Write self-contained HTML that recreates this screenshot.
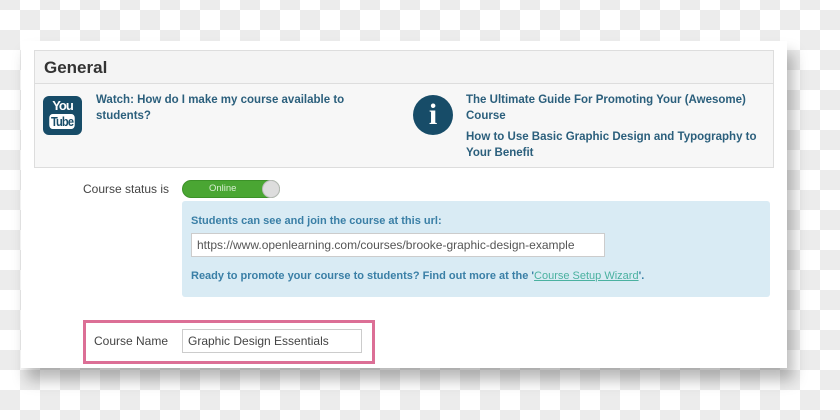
<!DOCTYPE html>
<html><head><style>
*{margin:0;padding:0;box-sizing:border-box}
body{width:840px;height:420px;overflow:hidden;position:relative;font-family:"Liberation Sans",sans-serif;
background-color:#fff;background-image:conic-gradient(#ececec 25%,#fff 0 50%,#ececec 0 75%,#fff 0);background-size:40px 40px;background-position:20px -10px}
.panel{position:absolute;left:21px;top:41px;width:766px;height:327px;background:#fff;box-shadow:6px 12px 14px rgba(0,0,0,0.28)}
.gen{position:absolute;left:13px;top:9px;width:740px;height:118px;border:1px solid #ddd;background:#f7f7f7}
.gen h1{height:33px;border-bottom:1px solid #ddd;background:#f4f4f4;font-size:17px;font-weight:bold;color:#333;padding:7px 0 0 9px}
.lnk{position:absolute;font-size:11.5px;font-weight:bold;color:#2b5f7c;line-height:16px}
.yt{position:absolute;left:8px;top:45px;width:39px;height:39px;background:#174c68;border-radius:6px;color:#fff;text-align:center;font-size:13px;font-weight:bold;line-height:15px;padding-top:2px;letter-spacing:-1px}
.yt span{display:inline-block;background:#fff;color:#174c68;border-radius:4px;padding:0 2px;margin-top:1px;transform:scaleX(.85)}
.info{position:absolute;left:378px;top:44px;width:40px;height:40px;border-radius:50%;background:#174c68;color:#fff;text-align:center;font:bold 30px "Liberation Serif",serif;line-height:40px}
.lab{position:absolute;font-size:12px;color:#444}
.tog{position:absolute;left:161px;top:139px;width:98px;height:18px;border-radius:9px;background:#4aa633;border:1px solid #3c9228;color:#d9efd3;font-size:9.5px;line-height:16px;padding-left:26px}
.tog i{position:absolute;right:-1px;top:-1px;width:18px;height:18px;border-radius:50%;background:#ddd;border:1px solid #bbb}
.blue{position:absolute;left:161px;top:160px;width:588px;height:96px;background:#d9ebf4;border-radius:3px}
.blue p{position:absolute;left:9px;font-size:11px;font-weight:bold;color:#3a7fa6}
.url{position:absolute;left:9px;top:32px;width:414px;height:24px;background:#fff;border:1px solid #ccc;font-size:12px;color:#555;padding:4px 5px}
.blue a{color:#4ab1a0;text-decoration:underline;font-weight:normal}
.pink{position:absolute;left:62px;top:279px;width:292px;height:44px;border:3px solid #dc6f96}
.inp{position:absolute;left:161px;top:288px;width:180px;height:24px;border:1px solid #ccc;font-size:12px;color:#444;padding:4px 5px}
</style></head><body>
<div class="panel">
 <div class="gen"><h1>General</h1>
  <div class="yt">You<br><span>Tube</span></div>
  <div class="lnk" style="left:61px;top:41px;width:280px">Watch: How do I make my course available to students?</div>
  <div class="info">i</div>
  <div class="lnk" style="left:431px;top:41px;width:300px">The Ultimate Guide For Promoting Your (Awesome) Course</div>
  <div class="lnk" style="left:431px;top:78px;width:300px">How to Use Basic Graphic Design and Typography to Your Benefit</div>
 </div>
 <div class="lab" style="left:62px;top:141px">Course status is</div>
 <div class="tog">Online<i></i></div>
 <div class="blue">
  <p style="top:14px">Students can see and join the course at this url:</p>
  <div class="url">https://www.openlearning.com/courses/brooke-graphic-design-example</div>
  <p style="top:69px">Ready to promote your course to students? Find out more at the '<a>Course Setup Wizard</a>'.</p>
 </div>
 <div class="pink"></div>
 <div class="lab" style="left:73px;top:293px">Course Name</div>
 <div class="inp">Graphic Design Essentials</div>
</div>
</body></html>
